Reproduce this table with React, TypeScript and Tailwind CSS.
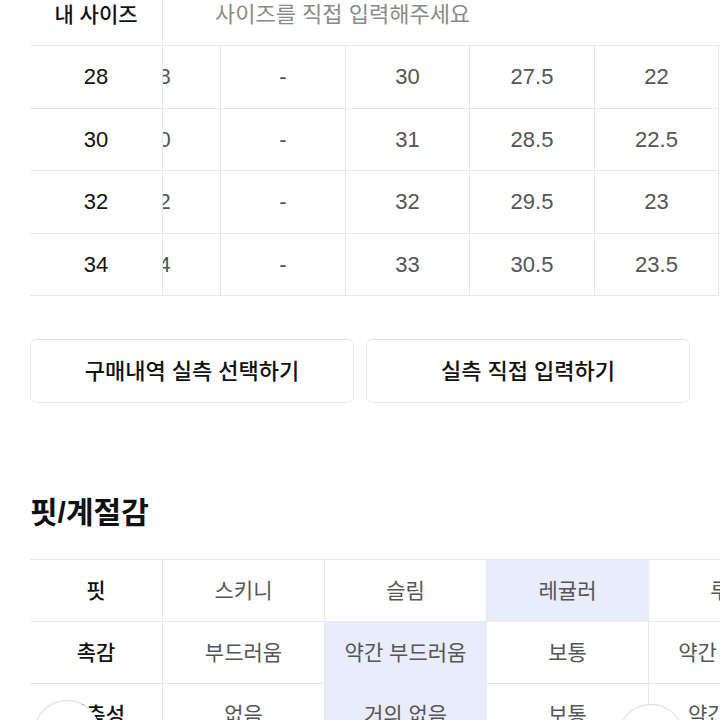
import React from "react";

const FONT = "font-['Liberation_Sans','Noto_Sans_CJK_KR',sans-serif]";

const sizeRows: (string)[][] = [
  ["28", "-", "30", "27.5", "22"],
  ["30", "-", "31", "28.5", "22.5"],
  ["32", "-", "32", "29.5", "23"],
  ["34", "-", "33", "30.5", "23.5"],
];
const colW = ["w-[124px]", "w-[125px]", "w-[124px]", "w-[125px]", "w-[124px]"];

type Cell = { t: string; on?: boolean };
const fitRows: { label: string; cells: Cell[] }[] = [
  { label: "핏", cells: [{ t: "스키니" }, { t: "슬림" }, { t: "레귤러", on: true }, { t: "루즈" }] },
  { label: "촉감", cells: [{ t: "부드러움" }, { t: "약간 부드러움", on: true }, { t: "보통" }, { t: "약간 거칠음" }] },
  { label: "신축성", cells: [{ t: "없음" }, { t: "거의 없음", on: true }, { t: "보통" }, { t: "약간 있음" }] },
];

export default function App() {
  return (
    <div className={`relative w-[720px] h-[720px] overflow-hidden bg-white ${FONT}`}>
      {/* size table */}
      <div className="flex pl-[30px]">
        <div className="w-[133px] shrink-0 border-r border-[#e8e8e8] bg-white">
          <div className="h-[46px] border-b border-[#e8e8e8] flex justify-center">
            <span className="text-[21px] leading-[30px] font-medium text-[#111]">내 사이즈</span>
          </div>
          {sizeRows.map((r) => (
            <div
              key={r[0]}
              className="h-[62.5px] border-b border-[#e8e8e8] flex items-center justify-center text-[22px] font-medium text-[#111]"
            >
              {r[0]}
            </div>
          ))}
        </div>
        <div className="flex-1 overflow-hidden">
          <div className="ml-[-66px] w-[700px]">
            <div className="h-[46px] border-b border-[#e8e8e8] pl-[118px]">
              <span className="text-[22px] leading-[30px] text-[#8a8a8a]">사이즈를 직접 입력해주세요</span>
            </div>
            {sizeRows.map((r) => (
              <div key={r[0]} className="flex h-[62.5px]">
                {r.map((v, i) => (
                  <div
                    key={i}
                    className={`${colW[i]} shrink-0 border-r border-b border-[#e8e8e8] flex items-center justify-center text-[22px] text-[#555]`}
                  >
                    {v}
                  </div>
                ))}
              </div>
            ))}
          </div>
        </div>
      </div>

      {/* buttons */}
      <div className="flex gap-[12px] px-[30px] mt-[43px]">
        <button className="w-[324px] h-[64px] rounded-[6px] border border-[#e6e6e6] bg-white text-[22px] font-medium text-[#111]">
          구매내역 실측 선택하기
        </button>
        <button className="w-[324px] h-[64px] rounded-[6px] border border-[#e6e6e6] bg-white text-[22px] font-medium text-[#111]">
          실측 직접 입력하기
        </button>
      </div>

      {/* heading */}
      <div className="px-[30px] mt-[90px] h-[40px] text-[30px] leading-[40px] font-bold text-[#111]">핏/계절감</div>

      {/* fit table */}
      <div className="ml-[30px] mt-[26px] w-[800px] border-t border-[#e8e8e8]">
        {fitRows.map((row) => (
          <div key={row.label} className="flex h-[62px]">
            <div className="w-[133px] shrink-0 border-r border-b border-[#e8e8e8] flex items-center justify-center text-[21px] font-medium text-[#111]">
              {row.label}
            </div>
            {row.cells.map((c, i) => (
              <div
                key={i}
                className={`w-[162px] shrink-0 flex items-center justify-center text-[21px] text-[#555] border-r border-b ${
                  c.on ? "bg-[#e9ecfb] border-[#e9ecfb]" : "border-[#e8e8e8]"
                }`}
              >
                {c.t}
              </div>
            ))}
          </div>
        ))}
      </div>

      {/* scroll buttons overlay */}
      <div className="absolute left-[34px] top-[700px] w-[66px] h-[66px] rounded-full bg-white border border-[#dcdcdc] shadow-[0_1px_4px_rgba(0,0,0,0.08)]" />
      <div className="absolute left-[618px] top-[704px] w-[66px] h-[66px] rounded-full bg-white border border-[#dcdcdc] shadow-[0_1px_4px_rgba(0,0,0,0.08)]" />
    </div>
  );
}
